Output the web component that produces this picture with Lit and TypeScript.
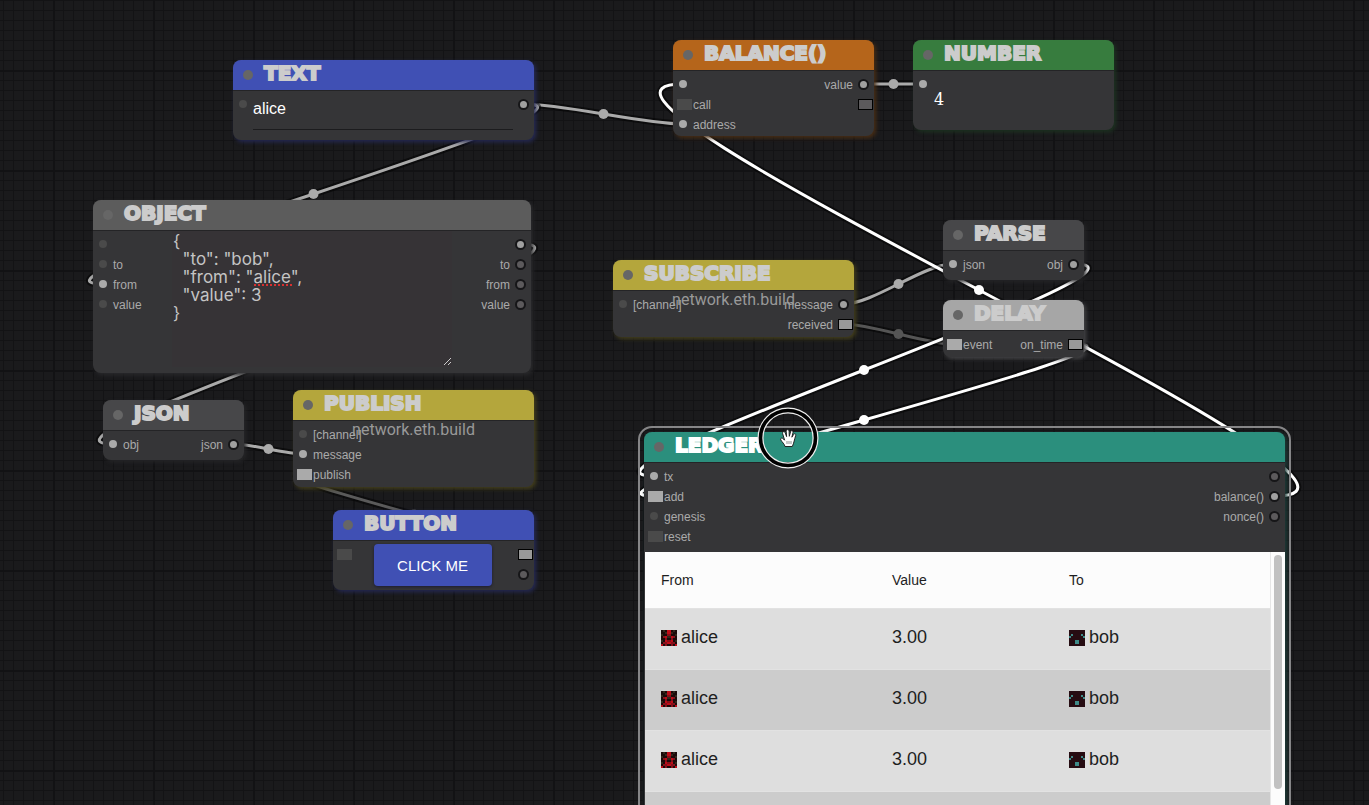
import { LitElement, html, svg, css, nothing } from "lit";
import { customElement, property } from "lit/decorators.js";
import { styleMap } from "lit/directives/style-map.js";

type Slot = { label?: string; kind?: "dot" | "event"; on?: boolean };
type NodeSpec = {
  id: string;
  title: string;
  x: number;
  y: number;
  w: number;
  body: number;
  color: string;
  glow: string;
  inputs: Slot[];
  outputs: Slot[];
  selected?: boolean;
};

const NODES: NodeSpec[] = [
  { id: "text", title: "TEXT", x: 233, y: 60, w: 301, body: 50, color: "#4050b4", glow: "#262a56",
    inputs: [{}], outputs: [{ on: true }] },
  { id: "balance", title: "BALANCE()", x: 673, y: 40, w: 201, body: 66, color: "#b5651b", glow: "#4a2e14",
    inputs: [{ on: true }, { label: "call", kind: "event" }, { label: "address", on: true }],
    outputs: [{ label: "value", on: true }, { kind: "event" }] },
  { id: "number", title: "NUMBER", x: 913, y: 40, w: 201, body: 60, color: "#377c3e", glow: "#1d3321",
    inputs: [{ on: true }], outputs: [] },
  { id: "object", title: "OBJECT", x: 93, y: 200, w: 438, body: 143, color: "#5c5c5c", glow: "#2a2a2c",
    inputs: [{}, { label: "to" }, { label: "from", on: true }, { label: "value" }],
    outputs: [{ on: true }, { label: "to" }, { label: "from" }, { label: "value" }] },
  { id: "json", title: "JSON", x: 103, y: 400, w: 141, body: 30, color: "#474749", glow: "#262628",
    inputs: [{ label: "obj", on: true }], outputs: [{ label: "json", on: true }] },
  { id: "publish", title: "PUBLISH", x: 293, y: 390, w: 241, body: 67, color: "#b4a63c", glow: "#45401c",
    inputs: [{ label: "[channel]" }, { label: "message", on: true }, { label: "publish", kind: "event", on: true }],
    outputs: [] },
  { id: "button", title: "BUTTON", x: 333, y: 510, w: 201, body: 50, color: "#4050b4", glow: "#262a56",
    inputs: [{ kind: "event" }], outputs: [{ kind: "event", on: true }, {}] },
  { id: "subscribe", title: "SUBSCRIBE", x: 613, y: 260, w: 241, body: 47, color: "#b4a63c", glow: "#45401c",
    inputs: [{ label: "[channel]" }],
    outputs: [{ label: "message", on: true }, { label: "received", kind: "event", on: true }] },
  { id: "parse", title: "PARSE", x: 943, y: 220, w: 141, body: 30, color: "#474749", glow: "#262628",
    inputs: [{ label: "json", on: true }], outputs: [{ label: "obj", on: true }] },
  { id: "delay", title: "DELAY", x: 943, y: 300, w: 141, body: 27, color: "#a6a6a6", glow: "#454547",
    inputs: [{ label: "event", kind: "event", on: true }],
    outputs: [{ label: "on_time", kind: "event", on: true }] },
  { id: "ledger", title: "LEDGER", x: 644, y: 432, w: 641, body: 390, color: "#2b8f7d", glow: "#1c3d38", selected: true,
    inputs: [{ label: "tx", on: true }, { label: "add", kind: "event", on: true }, { label: "genesis" }, { label: "reset", kind: "event" }],
    outputs: [{}, { label: "balance()", on: true }, { label: "nonce()" }] },
];

const LINKS: [number, number, number, number, string][] = [
  [524, 104, 683, 124, "#aaa"],
  [524, 104, 103, 284, "#aaa"],
  [521, 244, 113, 444, "#aaa"],
  [234, 444, 303, 454, "#aaa"],
  [525, 554, 303, 475, "#5a5a5a"],
  [864, 84, 923, 84, "#aaa"],
  [844, 304, 953, 264, "#aaa"],
  [844, 324, 953, 344, "#555"],
  [1074, 264, 654, 476, "#fff"],
  [1074, 344, 654, 496, "#fff"],
  [1275, 496, 683, 84, "#fff"],
];

const ALICE = ["kbkrrkbk", "kkbrrbkk", "bkkddkkb", "kdrbbrdk", "kkdkkdkk", "bkrddrkb", "kddrrddk", "rkdkkdkr"];
const BOB = ["mmmmmmmm", "mmmmmmmm", "mtmmmmtm", "tmmmmmmt", "mmmmmmmm", "mmmttmmm", "mmmttmmm", "mmmmmmmm"];
const PIXELS: Record<string, string> = {
  k: "#1c0a0a", b: "#33281c", r: "#c00c18", d: "#86101a", m: "#260c12", t: "#3f8a88",
};

const identicon = (rows: string[]) => html`<svg class="identicon" viewBox="0 0 8 8" shape-rendering="crispEdges" aria-hidden="true">
  ${rows.map((row, y) => [...row].map((c, x) => svg`<rect x=${x} y=${y} width="1" height="1" fill=${PIXELS[c]}></rect>`))}
</svg>`;

@customElement("graph-node")
class GraphNode extends LitElement {
  @property({ attribute: false }) spec!: NodeSpec;

  static styles = css`
    :host { display: block; font-family: "Liberation Sans", Arial, sans-serif; }
    .node { position: relative; border-radius: 8px; background: #353537; box-shadow: 2px 2px 4px var(--glow); }
    .selected::before {
      content: ""; position: absolute; inset: -6px; border: 2px solid #858587; border-radius: 14px;
    }
    .title {
      position: relative; display: flex; align-items: center; gap: 11px; height: 30px; padding-left: 10px;
      box-sizing: border-box; border-radius: 8px 8px 0 0; background: var(--color);
    }
    .dot { width: 10px; height: 10px; border-radius: 50%; background: #666; flex: none; }
    h2 {
      margin: 0; padding-bottom: 4px; font: 700 20px/24px "DejaVu Sans", sans-serif; color: #ccc;
      -webkit-text-stroke: 2px currentColor; white-space: nowrap;
    }
    .selected h2 { color: #fff; }
    .body { position: relative; box-sizing: border-box; border-top: 1px solid #242426; }
    .slots { display: flex; justify-content: space-between; padding: 3px 5px 0; }
    ul { margin: 0; padding: 0; list-style: none; }
    li { display: flex; align-items: center; height: 20px; font-size: 12px; line-height: 20px; color: #aaa; }
    .label { padding-top: 1px; }
    .out { text-align: right; }
    .out li { justify-content: flex-end; }
    .port { width: 8px; height: 8px; margin: 0 6px 0 1px; border-radius: 50%; background: #4a4a4a; flex: none; }
    .port.on { background: #aaa; }
    .out .port { width: 7px; height: 7px; margin: 0 0 0 5px; border: 2px solid #161618; background: #5c5a5c; }
    .out .port.on { background: #a0a0a0; }
    .port.event { width: 15px; height: 11px; margin: 0 1px 0 -1px; border-radius: 0; background: #4a4a4a; }
    .port.event.on { background: #aaa; }
    .out .port.event { width: 13px; height: 9px; margin: 0 -4px 0 5px; border: 1px solid #000; background: #5c5a5c; }
    .out .port.event.on { background: #999; }
    .content { position: absolute; inset: 0; pointer-events: none; }
  `;

  private port(s: Slot) {
    return html`<span class="port ${s.kind === "event" ? "event" : ""} ${s.on ? "on" : ""}"></span>`;
  }

  private label(s: Slot) {
    return s.label ? html`<span class="label">${s.label}</span>` : nothing;
  }

  render() {
    const n = this.spec;
    return html`<section class="node ${n.selected ? "selected" : ""}" style=${styleMap({ "--color": n.color, "--glow": n.glow })}>
      <header class="title"><span class="dot"></span><h2>${n.title}</h2></header>
      <div class="body" style=${styleMap({ height: `${n.body}px` })}>
        <div class="slots">
          <ul class="in">${n.inputs.map((s) => html`<li>${this.port(s)}${this.label(s)}</li>`)}</ul>
          <ul class="out">${n.outputs.map((s) => html`<li>${this.label(s)}${this.port(s)}</li>`)}</ul>
        </div>
        <div class="content"><slot></slot></div>
      </div>
    </section>`;
  }
}

@customElement("app-root")
class AppRoot extends LitElement {
  static styles = css`
    :host { display: block; font-family: "Liberation Sans", Arial, sans-serif; }
    .board {
      position: relative; height: 100vh; overflow: hidden; background-color: #1a1a1c;
      background-image:
        linear-gradient(90deg, #121214 2px, transparent 2px),
        linear-gradient(#121214 2px, transparent 2px),
        linear-gradient(90deg, #131315 1px, transparent 1px),
        linear-gradient(#131315 1px, transparent 1px);
      background-size: 100px 100px, 100px 100px, 10px 10px, 10px 10px;
      background-position: 53px 0, 0 70px, 3px 0, 0 0;
    }
    .links { position: absolute; inset: 0; width: 100%; height: 100%; }
    .place { position: absolute; }
    .field { padding: 5px 21px 0 20px; }
    .field input {
      display: block; width: 100%; height: 34px; box-sizing: border-box; padding: 0 0 8px; border: 0;
      border-bottom: 1px solid #1c1c1e; background: none; color: #fff; font: 16px "Liberation Sans", Arial, sans-serif;
    }
    .value { padding: 18px 21px; font: 16px/22px "DejaVu Serif", serif; color: #fff; }
    .editor { position: relative; width: 280px; margin: 0 0 0 79px; }
    .editor textarea {
      display: block; width: 280px; height: 136px; box-sizing: border-box; padding: 1px; border: 0; resize: none;
      background: #363336; color: #c4c4c4; font: 17px/18px Inter, sans-serif; white-space: pre; overflow: hidden;
    }
    .squiggle { position: absolute; left: 82px; top: 53px; width: 38px; border-top: 2px dotted #d83030; }
    .grip { position: absolute; right: 1px; bottom: 2px; width: 7px; height: 7px; }
    .channel { text-align: center; font: 16px/18px Roboto, sans-serif; color: #999; }
    .action { display: flex; justify-content: center; padding: 3px 2px 0 0; }
    .action button {
      width: 118px; height: 42px; border: 0; border-radius: 4px; background: #4050b4; color: #fff;
      font: 15px "Liberation Sans", Arial, sans-serif; box-shadow: 0 1px 3px #1c1c30;
    }
    .pane { display: flex; height: 300px; margin: 89px 0 0 1px; background: #fcfcfc; }
    table { flex: 1; border-collapse: collapse; table-layout: fixed; color: #1e1e1e; height: max-content; }
    .wide { width: 231px; }
    .mid { width: 177px; }
    th { height: 56px; padding: 0 16px; text-align: left; font-size: 14px; font-weight: 400; box-sizing: border-box; }
    td { height: 61px; padding: 0 16px 2px; font-size: 18px; box-sizing: border-box; background: #dedede; border-top: 1px solid #e2e2e2; }
    tr:nth-child(even) td { background: #ccc; }
    .party { display: flex; align-items: center; gap: 4px; }
    .identicon { width: 16px; height: 16px; }
    .track { width: 15px; box-sizing: border-box; border-left: 1px solid #e6e6e6; padding: 3px 3px 0; }
    .thumb { height: 234px; border-radius: 4px; background: #c1c1c1; }
    .pointer { position: absolute; width: 62px; height: 62px; }
  `;

  private content(id: string) {
    switch (id) {
      case "text":
        return html`<div class="field"><input type="text" aria-label="Text value" .value=${"alice"} /></div>`;
      case "number":
        return html`<div class="value">4</div>`;
      case "object":
        return html`<div class="editor">
          <textarea aria-label="Object source" spellcheck="false" .value=${'{\n  "to": "bob",\n  "from": "alice",\n  "value": 3\n}'}></textarea>
          <span class="squiggle"></span>
          <svg class="grip" viewBox="0 0 7 7" aria-hidden="true"><path d="M0 7 7 0M4 7 7 4" stroke="#ccc" fill="none"></path></svg>
        </div>`;
      case "publish":
      case "subscribe":
        return html`<div class="channel">network.eth.build</div>`;
      case "button":
        return html`<div class="action"><button type="button">CLICK ME</button></div>`;
      case "ledger":
        return html`<div class="pane">
          <table>
            <colgroup><col class="wide" /><col class="mid" /><col /></colgroup>
            <thead><tr><th>From</th><th>Value</th><th>To</th></tr></thead>
            <tbody>${[1, 2, 3, 4].map(() => html`<tr>
              <td><span class="party">${identicon(ALICE)}alice</span></td>
              <td>3.00</td>
              <td><span class="party">${identicon(BOB)}bob</span></td>
            </tr>`)}</tbody>
          </table>
          <div class="track"><div class="thumb"></div></div>
        </div>`;
      default:
        return nothing;
    }
  }

  private link([ax, ay, bx, by, color]: [number, number, number, number, string]) {
    const reach = Math.hypot(bx - ax, by - ay) * 0.25;
    const d = `M${ax} ${ay}C${ax + reach} ${ay} ${bx - reach} ${by} ${bx} ${by}`;
    return svg`<path d=${d} stroke="#000" stroke-opacity=".5" stroke-width="7"></path>
      <path d=${d} stroke=${color} stroke-width="3"></path>
      <circle cx=${(ax + bx) / 2} cy=${(ay + by) / 2} r="5" fill=${color}></circle>`;
  }

  render() {
    return html`<main class="board">
      <svg class="links" fill="none" aria-hidden="true">${LINKS.map((l) => this.link(l))}</svg>
      ${NODES.map((n) => html`<graph-node class="place" .spec=${n}
        style=${styleMap({ left: `${n.x}px`, top: `${n.y}px`, width: `${n.w}px` })}>${this.content(n.id)}</graph-node>`)}
      <svg class="pointer" style=${styleMap({ left: "757px", top: "407px" })} viewBox="0 0 62 62" fill="none" aria-hidden="true">
        <circle cx="31" cy="31" r="27.5" stroke="#eee" stroke-width="6"></circle>
        <circle cx="31" cy="31" r="27.5" stroke="#000" stroke-width="3.6"></circle>
        <path d="M28 39.500C27.500 37 25 35 23.800 33C22.900 31.200 25 30.300 26.500 32L27.600 33.200L25.600 26.600C25.100 24.500 27.600 23.800 28.300 26L29.600 29.600L29.200 24.300C29.200 22.200 31.900 22.100 32.100 24.200L32.300 29.300L33.500 24.900C34.100 22.900 36.300 23.500 36 25.600L34.900 30.200L36.500 27.600C37.500 25.900 39.300 27 38.600 28.800C37.500 32 37 36 35.300 39.500Z" fill="#fff" stroke="#222" stroke-width="1"></path>
        <path d="M30 34V37M32 34V37M34 34V37" stroke="#444" stroke-width=".6"></path>
      </svg>
    </main>`;
  }
}
